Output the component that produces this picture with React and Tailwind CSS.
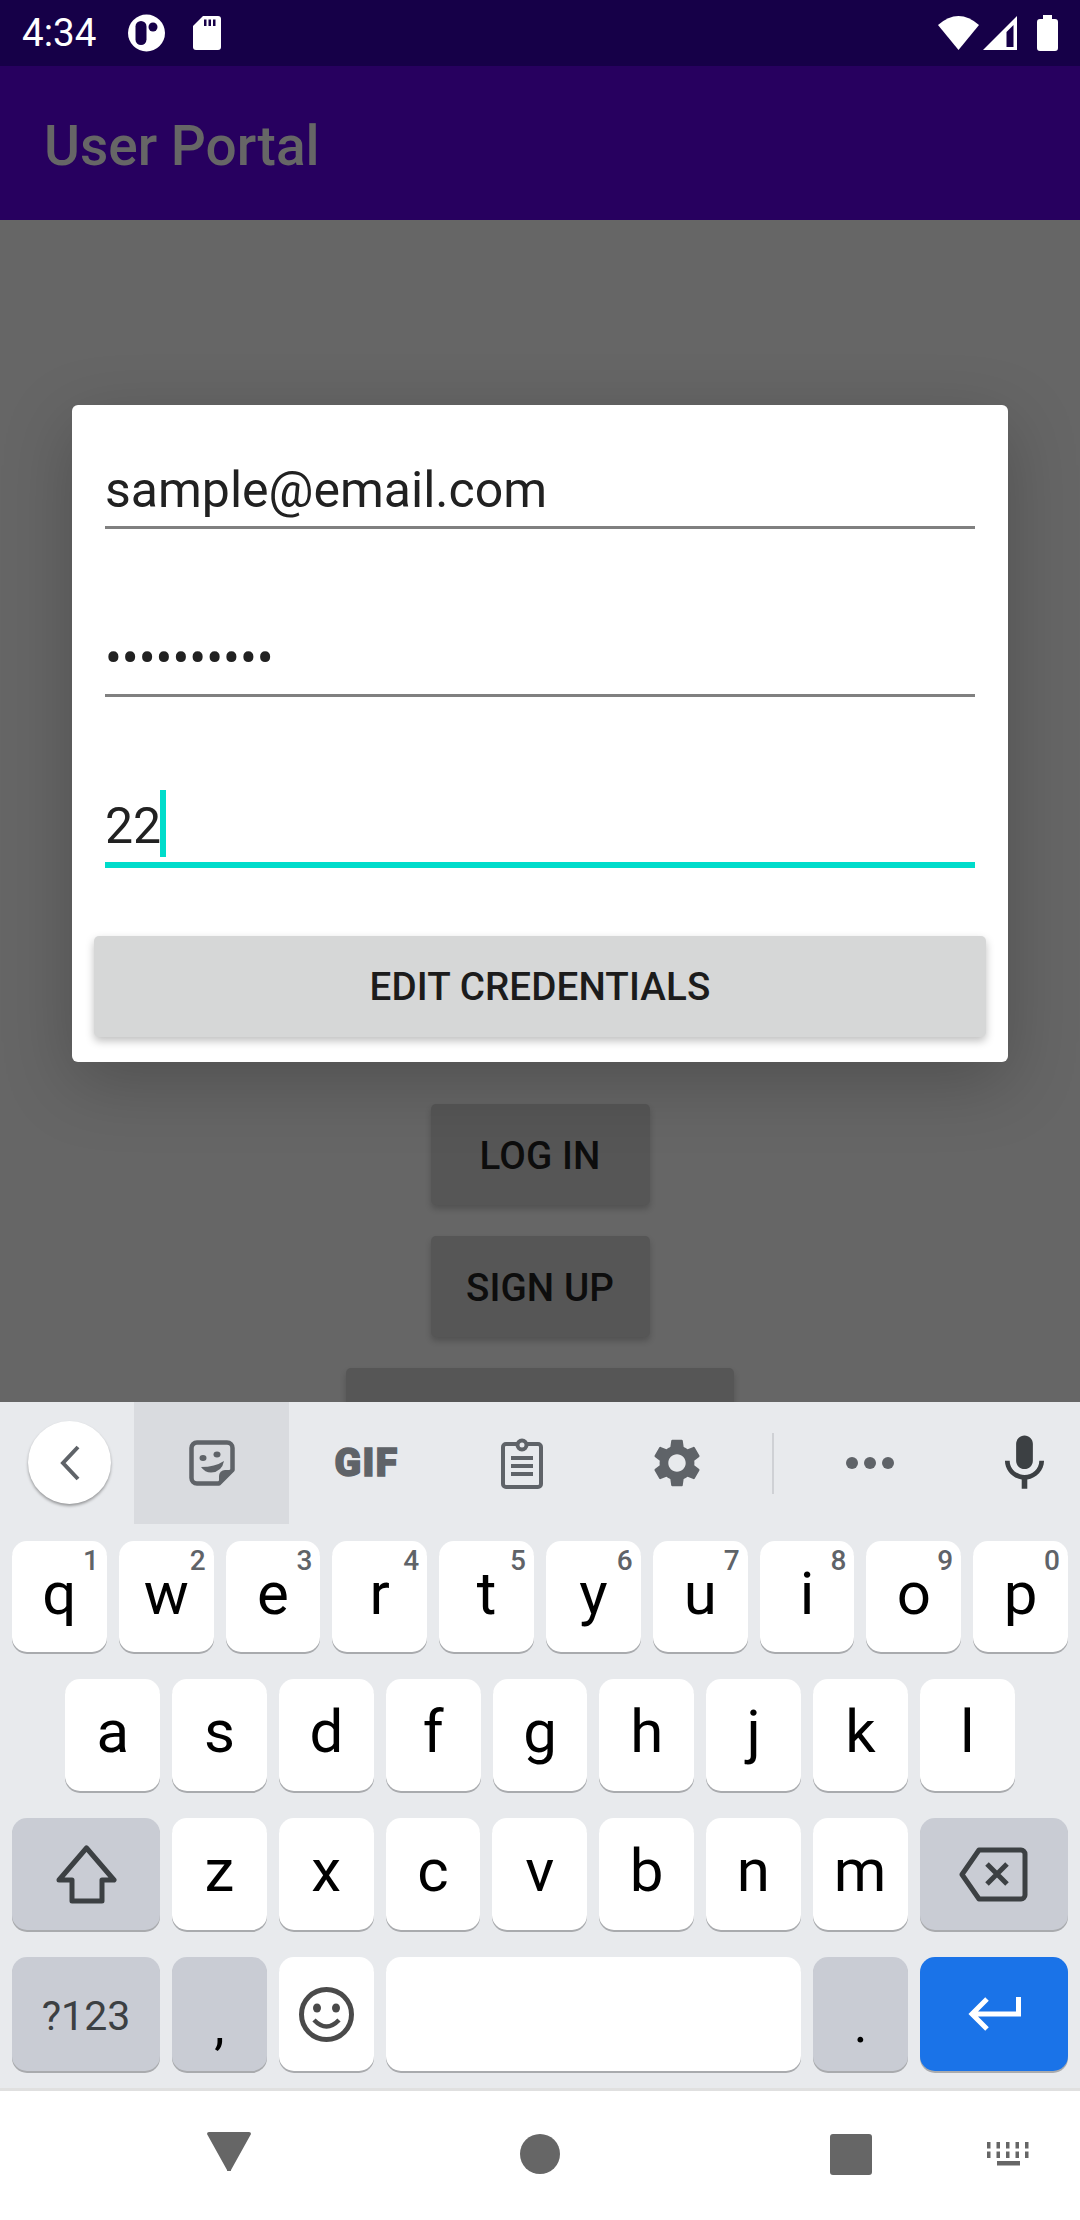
import React from 'react';

const row1 = [['q', '1'], ['w', '2'], ['e', '3'], ['r', '4'], ['t', '5'], ['y', '6'], ['u', '7'], ['i', '8'], ['o', '9'], ['p', '0']];
const row2 = ['a', 's', 'd', 'f', 'g', 'h', 'j', 'k', 'l'];
const row3 = ['z', 'x', 'c', 'v', 'b', 'n', 'm'];

const keyBase = 'relative flex items-center justify-center rounded-[15px] shadow-[0_2px_0_#a9abae]';

function LetterKey({ label, hint }) {
    return (
        <div className={`${keyBase} w-[94.8px] h-full bg-white pb-[6px] text-[60px] leading-[70px] text-black`}>
            {label}
            {hint && <span className="absolute right-[8px] top-[4px] text-[28px] font-medium leading-[32px] text-[#5f6368]">{hint}</span>}
        </div>
    );
}

function StatusBar() {
    return (
        <div className="flex h-[66px] items-center bg-[#160048] pl-[22px] text-white">
            <span className="w-[106px] text-[38.6px] leading-[44px]">4:34</span>
            <svg width="37" height="38" viewBox="0 0 37 38" className="mb-[1px]">
                <circle cx="18.5" cy="19" r="18.5" fill="#fff" />
                <rect x="7.5" y="7" width="11" height="24" rx="5.5" fill="#160048" />
                <circle cx="25" cy="13" r="4.5" fill="#160048" />
            </svg>
            <svg width="28" height="34" viewBox="0 0 28 34" className="ml-[28px]">
                <path d="M10 0H25a3 3 0 0 1 3 3V31a3 3 0 0 1-3 3H3a3 3 0 0 1-3-3V10z" fill="#fff" />
                <rect x="11" y="3.5" width="2.5" height="6.5" fill="#160048" />
                <rect x="15.5" y="3.5" width="2.5" height="6.5" fill="#160048" />
                <rect x="20" y="3.5" width="2.5" height="6.5" fill="#160048" />
            </svg>
            <div className="ml-auto flex items-center pr-[22px]">
                <svg width="41" height="34" viewBox="0 0 41 34">
                    <path d="M0 9Q20.5-9 41 9L20.5 34Z" fill="#fff" />
                </svg>
                <svg width="34" height="34" viewBox="0 0 34 34" className="ml-[4px]">
                    <path d="M0 34L34 0V34Z" fill="#fff" />
                    <path d="M30.5 9L23.5 16V31H30.5Z" fill="#160048" />
                </svg>
                <svg width="21" height="36" viewBox="0 0 21 36" className="ml-[20px]">
                    <path d="M6 0H15V4H18a3 3 0 0 1 3 3V33a3 3 0 0 1-3 3H3a3 3 0 0 1-3-3V7a3 3 0 0 1 3-3H6Z" fill="#fff" />
                </svg>
            </div>
        </div>
    );
}

function Field({ value, active }) {
    return (
        <div className={`relative flex items-start pb-[7px] ${active ? 'border-b-[6px] border-[#00dccb]' : 'border-b-[3px] border-[#808080]'}`}>
            <span className="h-[56px] text-[50px] leading-[54px] text-[#212121]">{value}</span>
            {active && <span className="absolute left-[55px] top-[-9px] h-[67px] w-[6px] bg-[#00dccb]" />}
        </div>
    );
}

function Dialog() {
    return (
        <div className="absolute left-[72px] top-[185px] flex h-[657px] w-[936px] flex-col rounded-[6px] bg-white px-[33px] pt-[58px] shadow-[0_20px_70px_rgba(0,0,0,0.22)]">
            <Field value="sample@email.com" />
            <div className="mt-[102px]">
                <Field value="••••••••••" />
            </div>
            <div className="mt-[102px]">
                <Field value="22" active />
            </div>
            <div className="-mx-[11px] mt-[68px] flex h-[101px] items-center justify-center rounded-[5px] bg-[#d6d7d7] pt-[1px] text-[38.6px] font-medium tracking-[0.1px] text-[#1c1c1c] shadow-[0_4px_8px_rgba(0,0,0,0.25)]">
                EDIT CREDENTIALS
            </div>
        </div>
    );
}

function DimButton({ label, width }) {
    return (
        <div className={`flex h-[101px] ${width} shrink-0 items-center justify-center rounded-[5px] bg-[#565656] pt-[2px] text-[38.6px] font-medium tracking-[0.1px] text-[#0d0d0d] shadow-[0_4px_6px_rgba(0,0,0,0.2)]`}>
            {label}
        </div>
    );
}

function Toolbar() {
    const ink = '#5f6368';
    return (
        <div className="flex h-[139px] items-start">
            <div className="flex h-[122px] w-[134px] items-start pl-[28px] pt-[19px]">
                <div className="flex h-[83px] w-[83px] items-center justify-center rounded-full bg-white shadow-[0_2px_3px_rgba(0,0,0,0.35)]">
                    <svg width="22" height="36" viewBox="0 0 22 36" fill="none" stroke={ink} strokeWidth="4">
                        <path d="M19 2L4 18L19 34" />
                    </svg>
                </div>
            </div>
            <div className="flex h-[122px] w-[155px] items-center justify-center bg-[#d9dbdf]">
                <svg width="46" height="46" viewBox="0 0 46 46" fill="none">
                    <path d="M8 2.5H38a5.5 5.5 0 0 1 5.5 5.5V30L30 43.5H8a5.5 5.5 0 0 1-5.5-5.5V8A5.5 5.5 0 0 1 8 2.5Z" stroke={ink} strokeWidth="4.5" strokeLinejoin="round" />
                    <path d="M43.5 30L30 43.5V36a6 6 0 0 1 6-6Z" fill={ink} />
                    <ellipse cx="14" cy="18" rx="3.5" ry="3" fill={ink} />
                    <ellipse cx="28" cy="14.5" rx="3.5" ry="3" fill={ink} />
                    <path d="M12 27Q26 27 35 21Q33 32 22 32.5Q16 32.5 12 27Z" fill={ink} />
                </svg>
            </div>
            <div className="flex h-[122px] w-[155px] items-center justify-center text-[39px] font-black leading-none tracking-[1.5px] text-[#5f6368] [-webkit-text-stroke:1.5px_#5f6368]">GIF</div>
            <div className="flex h-[122px] w-[155px] items-center justify-center">
                <svg width="42" height="51" viewBox="0 0 42 51" fill="none">
                    <rect x="2" y="6" width="38" height="43" rx="3" stroke={ink} strokeWidth="4" />
                    <circle cx="21" cy="7" r="4.5" fill="#e8eaed" stroke={ink} strokeWidth="4" />
                    <rect x="10" y="18" width="22" height="4" fill={ink} />
                    <rect x="10" y="26" width="22" height="4" fill={ink} />
                    <rect x="10" y="34" width="22" height="4" fill={ink} />
                </svg>
            </div>
            <div className="flex h-[122px] w-[155px] items-center justify-center">
                <svg width="58" height="58" viewBox="0 0 24 24" fill={ink}>
                    <path d="M19.14 12.94c.04-.3.06-.61.06-.94 0-.32-.02-.64-.07-.94l2.03-1.58c.18-.14.23-.41.12-.61l-1.92-3.32c-.12-.22-.37-.29-.59-.22l-2.39.96c-.5-.38-1.03-.7-1.62-.94l-.36-2.54c-.04-.24-.24-.41-.48-.41h-3.84c-.24 0-.43.17-.47.41l-.36 2.54c-.59.24-1.13.57-1.62.94l-2.39-.96c-.22-.08-.47 0-.59.22L2.74 8.87c-.12.21-.08.47.12.61l2.03 1.58c-.05.3-.09.63-.09.94s.02.64.07.94l-2.03 1.58c-.18.14-.23.41-.12.61l1.92 3.32c.12.22.37.29.59.22l2.39-.96c.5.38 1.03.7 1.62.94l.36 2.54c.05.24.24.41.48.41h3.84c.24 0 .44-.17.47-.41l.36-2.54c.59-.24 1.13-.56 1.62-.94l2.39.96c.22.08.47 0 .59-.22l1.92-3.32c.12-.22.07-.47-.12-.61l-2.01-1.58zM12 15.6c-1.98 0-3.6-1.62-3.6-3.6s1.62-3.6 3.6-3.6 3.6 1.62 3.6 3.6-1.62 3.6-3.6 3.6z" />
                </svg>
            </div>
            <div className="ml-[18px] mt-[31px] h-[61px] w-[2px] bg-[#cfd1d5]" />
            <div className="ml-[19px] flex h-[122px] w-[154px] items-center justify-center gap-[6px]">
                <span className="h-[12px] w-[12px] rounded-full bg-[#5f6368]" />
                <span className="h-[12px] w-[12px] rounded-full bg-[#5f6368]" />
                <span className="h-[12px] w-[12px] rounded-full bg-[#5f6368]" />
            </div>
            <div className="flex h-[122px] w-[133px] items-center pl-[44px]">
                <svg width="67" height="67" viewBox="0 0 24 24" fill="#3c4043">
                    <path d="M12 14c1.66 0 2.99-1.34 2.99-3L15 5c0-1.66-1.34-3-3-3S9 3.34 9 5v6c0 1.66 1.34 3 3 3zm5.3-3c0 3-2.54 5.1-5.3 5.1S6.7 14 6.7 11H5c0 3.41 2.72 6.23 6 6.72V21h2v-3.28c3.28-.48 6-3.3 6-6.72h-1.7z" />
                </svg>
            </div>
        </div>
    );
}

function Keyboard() {
    return (
        <div className="flex h-[686px] flex-col overflow-hidden bg-[#e8eaed] font-['Roboto',sans-serif]">
            <Toolbar />
            <div className="flex flex-col gap-[27px] px-[12px]">
                <div className="flex h-[111px] gap-[12px]">
                    {row1.map(([k, n]) => <LetterKey key={k} label={k} hint={n} />)}
                </div>
                <div className="flex h-[112px] justify-center gap-[12px]">
                    {row2.map((k) => <LetterKey key={k} label={k} />)}
                </div>
                <div className="flex h-[112px] gap-[12px]">
                    <div className={`${keyBase} w-[148px] bg-[#c9ccd4]`}>
                        <svg width="61" height="59" viewBox="0 0 61 59" fill="none" stroke="#3c4043" strokeWidth="5" strokeLinejoin="round">
                            <path d="M30.5 3L58 35H46V56H16V35H3Z" />
                        </svg>
                    </div>
                    {row3.map((k) => <LetterKey key={k} label={k} />)}
                    <div className={`${keyBase} w-[148px] bg-[#c9ccd4]`}>
                        <svg width="69" height="55" viewBox="0 0 69 55" fill="none" stroke="#3c4043" strokeWidth="5" strokeLinejoin="round">
                            <path d="M20 3H62a4 4 0 0 1 4 4V48a4 4 0 0 1-4 4H20L3 27.5Z" />
                            <path d="M28 17L48 37M48 17L28 37" />
                        </svg>
                    </div>
                </div>
                <div className="flex h-[114px] gap-[12px]">
                    <div className={`${keyBase} w-[148px] bg-[#c9ccd4] pt-[5px] text-[41px] text-[#3c4043]`}>?123</div>
                    <div className={`${keyBase} w-[94.8px] items-end bg-[#c9ccd4] pb-[14px] text-[52px] leading-[60px] text-black`}>,</div>
                    <div className={`${keyBase} w-[94.8px] bg-white`}>
                        <svg width="55" height="55" viewBox="0 0 55 55" fill="none">
                            <circle cx="27.5" cy="27.5" r="25" stroke="#4a4a4a" strokeWidth="5" />
                            <ellipse cx="18" cy="21" rx="4" ry="4.5" fill="#4a4a4a" />
                            <ellipse cx="37" cy="21" rx="4" ry="4.5" fill="#4a4a4a" />
                            <path d="M15 33Q27.5 46 40 33" stroke="#4a4a4a" strokeWidth="4.5" />
                        </svg>
                    </div>
                    <div className={`${keyBase} flex-1 bg-white`} />
                    <div className={`${keyBase} w-[94.8px] items-end bg-[#c9ccd4] pb-[16px] text-[52px] leading-[60px] text-black`}>.</div>
                    <div className={`${keyBase} w-[148px] bg-[#1a73e8]`}>
                        <svg width="53" height="34" viewBox="0 0 53 34" fill="none" stroke="#fff" strokeWidth="5">
                            <path d="M50.5 0V17H5M19 2L4 17L19 32" />
                        </svg>
                    </div>
                </div>
            </div>
        </div>
    );
}

function NavBar() {
    return (
        <div className="flex h-[132px] items-center border-t-[3px] border-[#e0e0e0] bg-white pb-[3px] pl-[207px]">
            <svg width="44" height="39" viewBox="0 0 44 39" className="mb-[6px]">
                <path d="M2 0H42a2 2 0 0 1 2 2L24 38a2 2 0 0 1-4 0L0 2A2 2 0 0 1 2 0Z" fill="#666" />
            </svg>
            <div className="ml-[269px] h-[40px] w-[40px] rounded-full bg-[#666]" />
            <div className="ml-[270px] h-[41px] w-[42px] rounded-[3px] bg-[#666]" />
            <svg width="43" height="24" viewBox="0 0 43 24" className="ml-[115px]" fill="#666">
                {[0, 9.5, 19, 28.5, 38].map((x) => (
                    <React.Fragment key={x}>
                        <rect x={x} y="0" width="3.5" height="6.5" />
                        <rect x={x} y="9.5" width="3.5" height="6.5" />
                    </React.Fragment>
                ))}
                <rect x="10" y="19" width="23" height="4.5" />
            </svg>
        </div>
    );
}

export default function App() {
    return (
        <div className="flex h-[2220px] w-[1080px] flex-col overflow-hidden bg-[#666] font-['Roboto',sans-serif]">
            <StatusBar />
            <div className="flex h-[154px] items-center bg-[#27005f] pl-[44px] pt-[6px] text-[55px] font-medium text-[#666]">User Portal</div>
            <div className="relative flex min-h-0 flex-1 flex-col items-center gap-[31px] overflow-hidden pt-[884px]">
                <DimButton label="LOG IN" width="w-[219px]" />
                <DimButton label="SIGN UP" width="w-[219px]" />
                <DimButton label="" width="w-[388px]" />
                <Dialog />
            </div>
            <Keyboard />
            <NavBar />
        </div>
    );
}
